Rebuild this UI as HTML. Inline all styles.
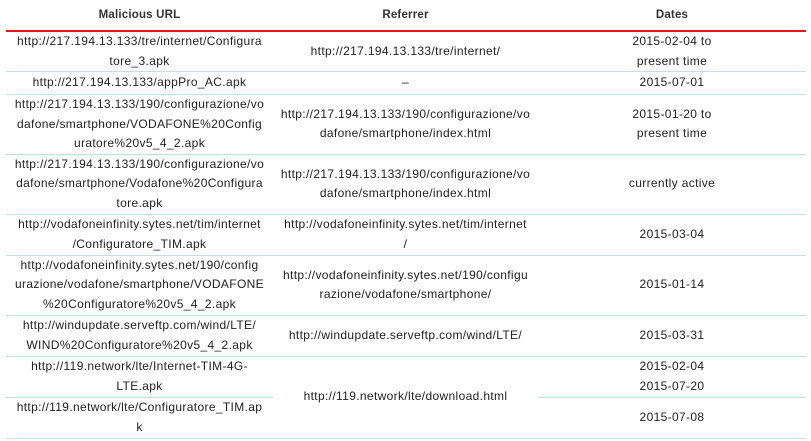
<!DOCTYPE html>
<html><head><style>
html,body{margin:0;padding:0;background:#fff;width:811px;height:441px;overflow:hidden}
body{font-family:"Liberation Sans",sans-serif;font-size:12px;letter-spacing:0.35px;color:#222}
table{position:absolute;left:6px;top:0;width:800px;border-collapse:collapse;table-layout:fixed}
th{font-weight:bold;font-size:11.5px;letter-spacing:0.2px;height:30px;border-bottom:2px solid #e8141b;padding:0;color:#333}
td{text-align:center;line-height:19.5px;border-bottom:1px solid #c5dde3;padding:0;white-space:nowrap;vertical-align:middle}
</style></head><body>
<table>
<colgroup><col style="width:267px"><col style="width:265px"><col style="width:268px"></colgroup>
<tr><th>Malicious URL</th><th>Referrer</th><th>Dates</th></tr>
<tr style="height:40px"><td>http://217.194.13.133/tre/internet/Configura<br>tore_3.apk</td><td>http://217.194.13.133/tre/internet/</td><td>2015-02-04 to<br>present time</td></tr>
<tr style="height:23px"><td>http://217.194.13.133/appPro_AC.apk</td><td>–</td><td>2015-07-01</td></tr>
<tr style="height:59px"><td>http://217.194.13.133/190/configurazione/vo<br>dafone/smartphone/VODAFONE%20Config<br>uratore%20v5_4_2.apk</td><td>http://217.194.13.133/190/configurazione/vo<br>dafone/smartphone/index.html</td><td>2015-01-20 to<br>present time</td></tr>
<tr style="height:60px"><td>http://217.194.13.133/190/configurazione/vo<br>dafone/smartphone/Vodafone%20Configura<br>tore.apk</td><td>http://217.194.13.133/190/configurazione/vo<br>dafone/smartphone/index.html</td><td>currently active</td></tr>
<tr style="height:41px"><td>http://vodafoneinfinity.sytes.net/tim/internet<br>/Configuratore_TIM.apk</td><td>http://vodafoneinfinity.sytes.net/tim/internet<br>/</td><td>2015-03-04</td></tr>
<tr style="height:60px"><td>http://vodafoneinfinity.sytes.net/190/config<br>urazione/vodafone/smartphone/VODAFONE<br>%20Configuratore%20v5_4_2.apk</td><td>http://vodafoneinfinity.sytes.net/190/configu<br>razione/vodafone/smartphone/</td><td>2015-01-14</td></tr>
<tr style="height:41px"><td>http://windupdate.serveftp.com/wind/LTE/<br>WIND%20Configuratore%20v5_4_2.apk</td><td>http://windupdate.serveftp.com/wind/LTE/</td><td>2015-03-31</td></tr>
<tr style="height:41px"><td>http://119.network/lte/Internet-TIM-4G-<br>LTE.apk</td><td rowspan="2">http://119.network/lte/download.html</td><td>2015-02-04<br>2015-07-20</td></tr>
<tr style="height:41px"><td>http://119.network/lte/Configuratore_TIM.ap<br>k</td><td>2015-07-08</td></tr>
</table>
</body></html>
